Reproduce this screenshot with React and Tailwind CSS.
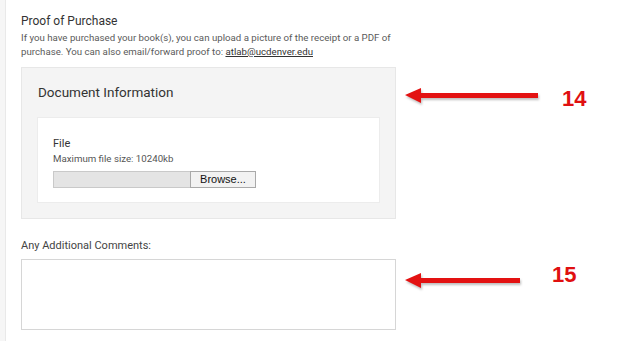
import React from 'react';

const Arrow = ({ length }) => (
  <svg width={length + 6} height="22" viewBox={`0 0 ${length + 6} 22`} className="drop-shadow-[1px_2px_1px_rgba(0,0,0,0.25)]">
    <path d={`M1 10 L17 3 L17 8 L${length} 8 L${length} 13 L17 13 L17 18 Z`} fill="#e31212" />
  </svg>
);

const App = () => {
  return (
    <div className="relative w-[620px] h-[341px] bg-white overflow-hidden text-[#333] font-['Roboto','Noto_Sans',sans-serif]">
      <div className="flex h-full">
        {/* left rail */}
        <div className="w-[6px] h-full bg-[#f6f6f6] border-r border-[#e9e9e9]" />

        <main className="flex flex-col w-[375px] ml-[15px] pt-[13px]">
          <h3 className="text-[12px] leading-[16px] text-[#333]">Proof of Purchase</h3>
          <p className="mt-[2px] text-[9.7px] leading-[14px] text-[#5a5a5a] whitespace-nowrap">
            If you have purchased your book(s), you can upload a picture of the receipt or a PDF of
            <br />
            purchase. You can also email/forward proof to:{' '}
            <span className="underline text-[#333]">atlab@ucdenver.edu</span>
          </p>

          {/* Document Information panel */}
          <section className="mt-[8px] h-[152px] bg-[#f4f4f4] border border-[#e7e7e7] px-[15px] pt-[15px]">
            <h2 className="ml-[1px] text-[13.5px] leading-[18px] text-[#333]">Document Information</h2>
            <div className="mt-[16px] h-[86px] bg-white border border-[#ececec] px-[15px] pt-[19px]">
              <div className="text-[11px] leading-[14px] text-[#333]">File</div>
              <div className="mt-[1px] text-[9.7px] leading-[14px] text-[#555]">Maximum file size: 10240kb</div>
              <div className="mt-[5px] flex h-[17px] w-[203px]">
                <div className="flex-1 bg-[#e4e4e4] border border-[#c9c9c9] border-r-0" />
                <button className="w-[66px] bg-[#f2f2f2] border border-[#a9a9a9] text-[11px] leading-none text-[#111] font-['Liberation_Sans',Arial,sans-serif]">
                  Browse...
                </button>
              </div>
            </div>
          </section>

          <label className="mt-[20px] text-[11px] leading-[14px] text-[#444]">Any Additional Comments:</label>
          <textarea className="mt-[6px] h-[71px] w-full border border-[#d6d6d6] bg-white resize-none outline-none" />
        </main>
      </div>

      {/* annotations */}
      <div className="absolute left-[404px] top-[85px]">
        <Arrow length={134} />
      </div>
      <span className="absolute left-[562px] top-[86px] text-[22px] leading-[26px] font-bold text-[#e01010] font-['Liberation_Sans',Arial,sans-serif]">14</span>

      <div className="absolute left-[404px] top-[270px]">
        <Arrow length={116} />
      </div>
      <span className="absolute left-[552px] top-[262px] text-[22px] leading-[26px] font-bold text-[#e01010] font-['Liberation_Sans',Arial,sans-serif]">15</span>
    </div>
  );
};

export default App;
